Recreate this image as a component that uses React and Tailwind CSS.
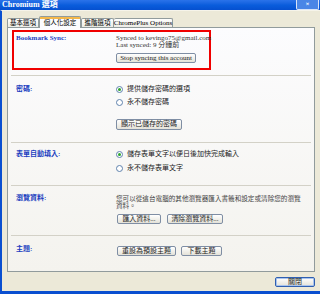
const FONT = { fontFamily: '"Liberation Serif", "Noto Sans CJK TC", serif' };

function XpButton({ children, className, primary }) {
    return (
        <button
            className={
                "flex h-[10px] shrink-0 items-center justify-center whitespace-nowrap rounded-[2px] border bg-linear-to-b from-white to-[#e4e2d8] text-[7px] leading-none text-[#222] " +
                (primary ? "border-[#2f5fb0] shadow-[inset_0_0_0_1px_#a9c4ee] " : "border-[#7f8ea4] ") +
                (className || "")
            }
        >
            {children}
        </button>
    );
}

function Radio({ checked, label }) {
    return (
        <div className="flex h-[12px] items-center gap-[4px]">
            <span className="flex h-[7px] w-[7px] items-center justify-center rounded-full border border-[#5f82ad] bg-white">
                {checked && <span className="h-[3px] w-[3px] rounded-full bg-[#2ca42c]" />}
            </span>
            <span className="leading-none text-[#222]">{label}</span>
        </div>
    );
}

function Label({ children, className }) {
    return (
        <div className={"w-[100px] shrink-0 font-bold text-[#1c3fc0] " + (className || "")}>
            {children}
        </div>
    );
}

function Separator({ className }) {
    return <div className={"mx-[3px] h-px bg-[#d3d1c7] " + (className || "")} />;
}

export default function App() {
    return (
        <div style={FONT} className="flex h-[294px] w-[320px] flex-col overflow-hidden whitespace-nowrap bg-[#ece9d8] text-[7px]">
            {/* title bar */}
            <div className="flex h-[10px] shrink-0 items-center justify-between bg-linear-to-b from-[#2a73ea] via-[#0a5ddc] to-[#0650d0]">
                <span className="pl-[2px] text-[8px] font-bold leading-none text-white">Chromium 選項</span>
                <span className="mr-px flex h-[10px] w-[23px] items-center justify-center rounded-b-[2px] border border-t-0 border-[#d8e4f8] bg-[#4a86e6] text-[7px] font-bold leading-none text-white">
                    ×
                </span>
            </div>

            {/* window body */}
            <div className="flex flex-1 flex-col border-b-[3px] border-l-2 border-t border-[#0a4fd0] border-t-[#f6f4ea] pl-[5px] pr-[4px] pt-[5px]">
                {/* tabs */}
                <div className="flex h-[11px] items-end">
                    <div className="flex h-[9px] w-[32px] items-center justify-center rounded-t-[2px] border border-b-0 border-[#919b9c] bg-linear-to-b from-white to-[#ecebe5] text-[6.5px] leading-none">
                        基本選項
                    </div>
                    <div className="relative z-10 -mb-px flex h-[12px] w-[42px] flex-col rounded-t-[2px] border border-b-0 border-[#919b9c] bg-[#fcfcfe]">
                        <div className="h-[2px] bg-[#f5b84a]" />
                        <div className="flex flex-1 items-center justify-center text-[6.5px] leading-none">個人化設定</div>
                    </div>
                    <div className="flex h-[9px] w-[33px] items-center justify-center rounded-t-[2px] border border-b-0 border-[#919b9c] bg-linear-to-b from-white to-[#ecebe5] text-[6.5px] leading-none">
                        進階選項
                    </div>
                    <div className="flex h-[9px] w-[59px] items-center justify-center rounded-t-[2px] border border-b-0 border-l-0 border-[#919b9c] bg-linear-to-b from-white to-[#ecebe5] leading-none">
                        ChromePlus Options
                    </div>
                </div>

                {/* panel */}
                <div className="flex h-[245px] w-[308px] flex-col border border-[#919b9c] bg-linear-to-b from-[#fcfcfe] to-[#f4f3ee]">
                    {/* sync box */}
                    <div className="ml-[4px] mt-[2px] flex h-[40px] w-[199px] border-2 border-[#f00000] pl-[2px] pt-[3px]">
                        <Label className="leading-[7px]">Bookmark Sync:</Label>
                        <div className="flex flex-col leading-[7px] text-[#333]">
                            <span>Synced to kevingo75@gmail.com</span>
                            <span>Last synced: 9 分鐘前</span>
                            <XpButton className="mt-[4px] w-[80px]">Stop syncing this account</XpButton>
                        </div>
                    </div>

                    <Separator className="mt-[5px]" />

                    {/* passwords */}
                    <div className="flex pl-[8px] pt-[7px]">
                        <Label className="leading-[12px]">密碼:</Label>
                        <div className="flex flex-col gap-px">
                            <Radio checked label="提供儲存密碼的選項" />
                            <Radio label="永不儲存密碼" />
                            <XpButton className="mt-[10px] h-[11px] w-[66px]">顯示已儲存的密碼</XpButton>
                        </div>
                    </div>

                    <Separator className="mt-[12px]" />

                    {/* autofill */}
                    <div className="flex pl-[8px] pt-[5px]">
                        <Label className="leading-[12px]">表單自動填入:</Label>
                        <div className="flex flex-col gap-[2px]">
                            <Radio checked label="儲存表單文字以便日後加快完成輸入" />
                            <Radio label="永不儲存表單文字" />
                        </div>
                    </div>

                    <Separator className="mt-[11px]" />

                    {/* browsing data */}
                    <div className="flex pl-[8px] pt-[9px]">
                        <Label className="leading-[7px]">瀏覽資料:</Label>
                        <div className="flex flex-col">
                            <p className="text-[6.6px] leading-[7px] text-[#444]">
                                您可以從這台電腦的其他瀏覽器匯入書籤和設定或清除您的瀏覽
                                <br />
                                資料。
                            </p>
                            <div className="mt-[5px] flex gap-[6px] pl-px">
                                <XpButton className="w-[44px]">匯入資料...</XpButton>
                                <XpButton className="w-[56px]">清除瀏覽資料...</XpButton>
                            </div>
                        </div>
                    </div>

                    <Separator className="mt-[11px]" />

                    {/* themes */}
                    <div className="flex pl-[8px] pt-[10px]">
                        <Label className="leading-[7px]">主題:</Label>
                        <div className="flex gap-[5px] pl-px">
                            <XpButton className="w-[59px]">重設為預設主題</XpButton>
                            <XpButton className="w-[41px]">下載主題</XpButton>
                        </div>
                    </div>
                </div>

                {/* footer */}
                <div className="mt-[5px] flex justify-end pr-px">
                    <XpButton primary className="w-[40px]">
                        關閉
                    </XpButton>
                </div>
            </div>
        </div>
    );
}
